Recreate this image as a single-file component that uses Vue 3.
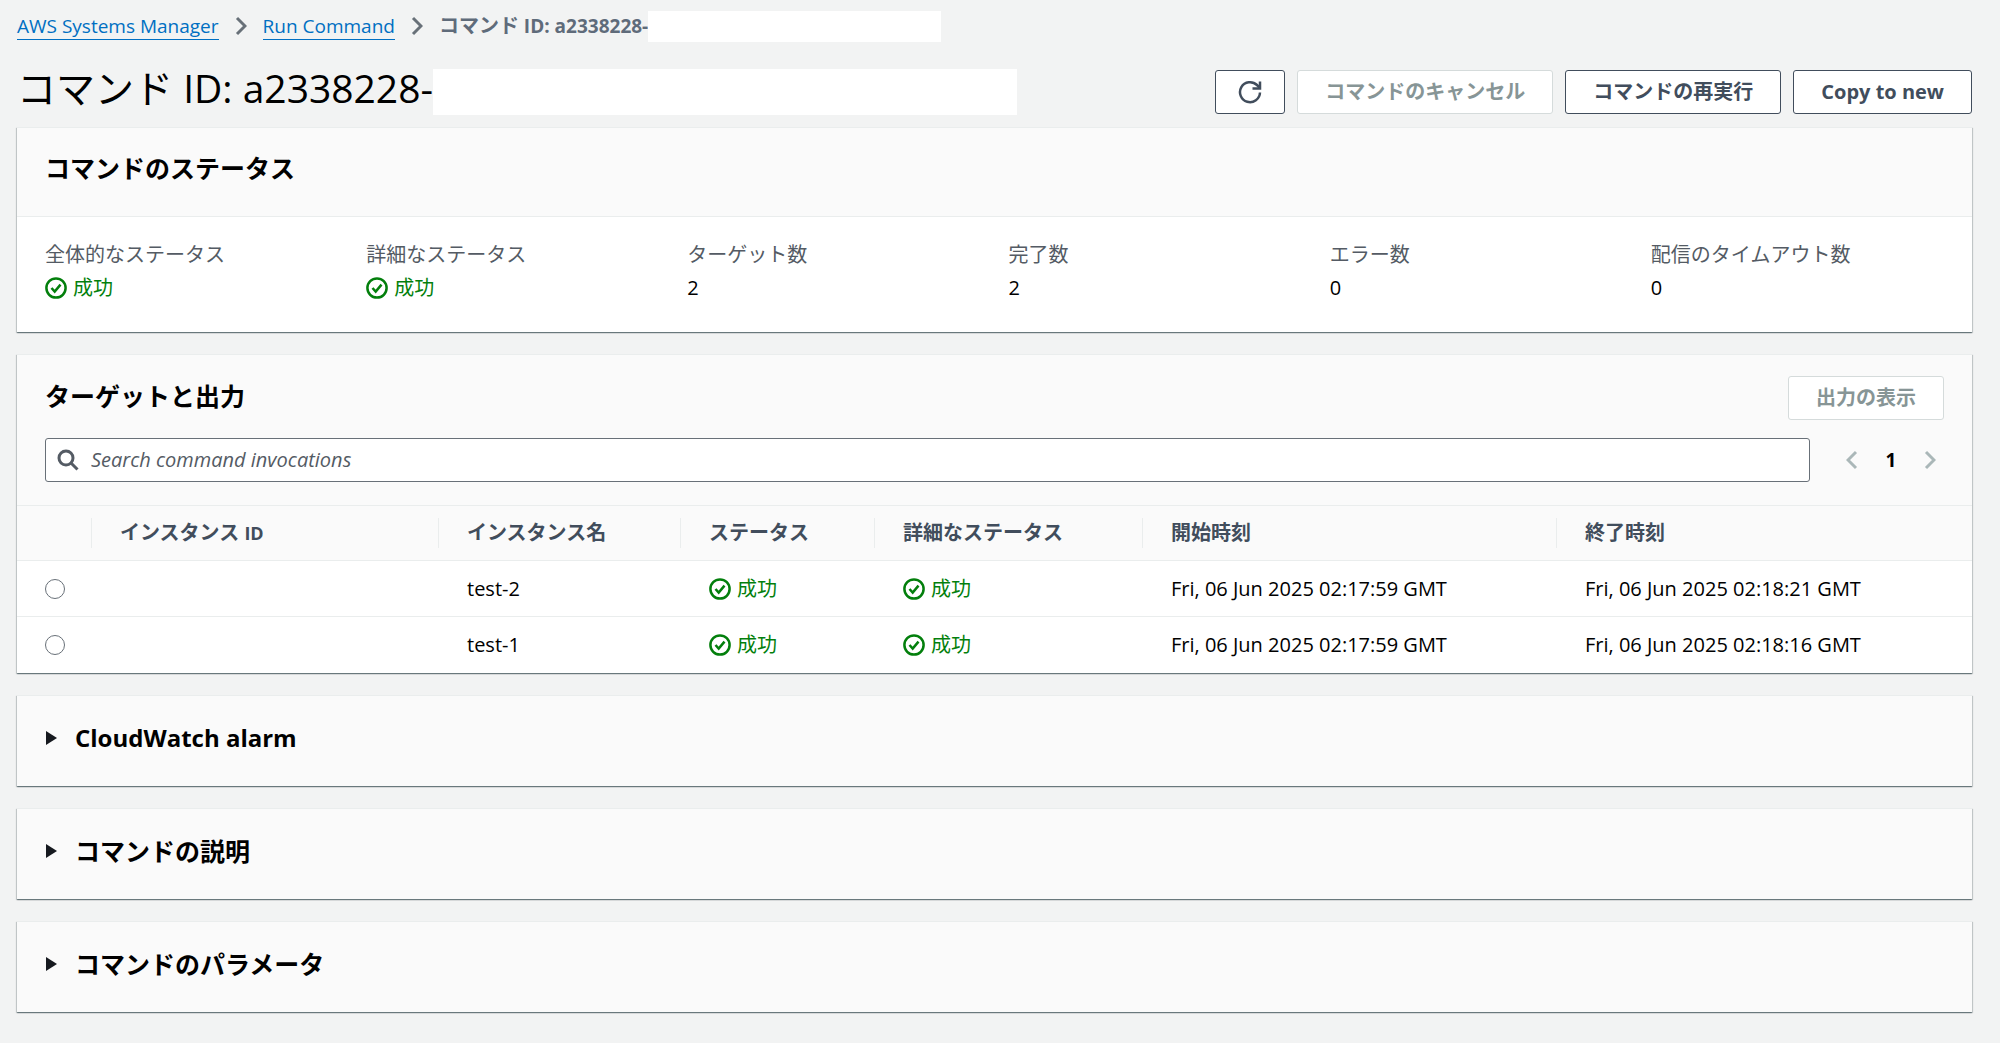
<script setup>
import { ref } from 'vue'

const commandId = 'a2338228-'
const selected = ref('')
const query = ref('')

const summary = [
  { label: '全体的なステータス', value: '成功', ok: true },
  { label: '詳細なステータス', value: '成功', ok: true },
  { label: 'ターゲット数', value: '2' },
  { label: '完了数', value: '2' },
  { label: 'エラー数', value: '0' },
  { label: '配信のタイムアウト数', value: '0' },
]

const invocations = [
  { name: 'test-2', start: 'Fri, 06 Jun 2025 02:17:59 GMT', end: 'Fri, 06 Jun 2025 02:18:21 GMT' },
  { name: 'test-1', start: 'Fri, 06 Jun 2025 02:17:59 GMT', end: 'Fri, 06 Jun 2025 02:18:16 GMT' },
]

const sections = [
  { title: 'CloudWatch alarm', latin: true },
  { title: 'コマンドの説明' },
  { title: 'コマンドのパラメータ' },
]
</script>

<template>
  <div class="page">
    <nav class="breadcrumb" aria-label="Breadcrumb">
      <a href="#">AWS Systems Manager</a>
      <svg class="crumb-sep" viewBox="0 0 12 20" aria-hidden="true"><path d="M2 2l8 8-8 8" /></svg>
      <a href="#">Run Command</a>
      <svg class="crumb-sep" viewBox="0 0 12 20" aria-hidden="true"><path d="M2 2l8 8-8 8" /></svg>
      <span class="crumb-current"><span class="ja">コマンド</span> ID: {{ commandId }}</span>
      <span class="mask mask-crumb"></span>
    </nav>

    <header class="title-row">
      <h1>コマンド ID: {{ commandId }}</h1>
      <span class="mask mask-title"></span>
      <div class="actions">
        <button class="btn btn-icon" type="button" aria-label="Refresh">
          <svg viewBox="0 0 24 24" aria-hidden="true">
            <path d="M22 12.500a10 10 0 1 1-3-7.500l3 3" />
            <path d="M22 1.500v7h-7.500" />
          </svg>
        </button>
        <button class="btn" type="button" disabled>コマンドのキャンセル</button>
        <button class="btn" type="button">コマンドの再実行</button>
        <button class="btn" type="button">Copy to new</button>
      </div>
    </header>

    <main class="cards">
      <section class="card">
        <div class="card-head"><h2>コマンドのステータス</h2></div>
        <dl class="summary">
          <div v-for="item in summary" :key="item.label">
            <dt>{{ item.label }}</dt>
            <dd>
              <span v-if="item.ok" class="status">
                <svg viewBox="0 0 22 22" aria-hidden="true"><circle cx="11" cy="11" r="9.600" /><path d="M6.500 11l3.200 3.600 5.800-7" /></svg>{{ item.value }}
              </span>
              <template v-else>{{ item.value }}</template>
            </dd>
          </div>
        </dl>
      </section>

      <section class="card">
        <div class="targets-head">
          <div class="targets-title">
            <h2>ターゲットと出力</h2>
            <button class="btn" type="button" disabled>出力の表示</button>
          </div>
          <div class="tools">
            <label class="search">
              <svg viewBox="0 0 22 22" aria-hidden="true"><circle cx="9" cy="9" r="7" /><path d="M14 14l6.500 6.500" /></svg>
              <input v-model="query" type="text" placeholder="Search command invocations" aria-label="Search command invocations" />
            </label>
            <div class="pager">
              <button type="button" disabled aria-label="Previous page"><svg viewBox="0 0 12 20" aria-hidden="true"><path d="M10 2l-8 8 8 8" /></svg></button>
              <button type="button" class="page-no">1</button>
              <button type="button" disabled aria-label="Next page"><svg viewBox="0 0 12 20" aria-hidden="true"><path d="M2 2l8 8-8 8" /></svg></button>
            </div>
          </div>
        </div>
        <table>
          <colgroup>
            <col class="c-pick" /><col class="c-id" /><col class="c-name" /><col class="c-status" /><col class="c-detail" /><col class="c-start" /><col />
          </colgroup>
          <thead>
            <tr>
              <th></th>
              <th><span>インスタンス <span class="latin">ID</span></span></th>
              <th><span>インスタンス名</span></th>
              <th><span>ステータス</span></th>
              <th><span>詳細なステータス</span></th>
              <th><span>開始時刻</span></th>
              <th><span>終了時刻</span></th>
            </tr>
          </thead>
          <tbody>
            <tr v-for="row in invocations" :key="row.name">
              <td class="pick"><input v-model="selected" type="radio" name="invocation" :value="row.name" :aria-label="row.name" /></td>
              <td></td>
              <td>{{ row.name }}</td>
              <td v-for="n in 2" :key="n">
                <span class="status">
                  <svg viewBox="0 0 22 22" aria-hidden="true"><circle cx="11" cy="11" r="9.600" /><path d="M6.500 11l3.200 3.600 5.800-7" /></svg>成功
                </span>
              </td>
              <td>{{ row.start }}</td>
              <td>{{ row.end }}</td>
            </tr>
          </tbody>
        </table>
      </section>

      <section v-for="s in sections" :key="s.title" class="card">
        <h2 class="fold">
          <button type="button" aria-expanded="false" :class="{ 'fold-latin': s.latin }">
            <svg viewBox="0 0 11 14" aria-hidden="true"><path d="M0 0l11 7-11 7z" /></svg>{{ s.title }}
          </button>
        </h2>
      </section>
    </main>
  </div>
</template>

<style>
body {
  margin: 0;
  background: #f2f3f3;
}
</style>

<style scoped>
.page {
  padding: 0 28px 31px 17px;
  color: #000;
  font-family: "Open Sans", "Noto Sans CJK JP", sans-serif;
  font-size: 20px;
  line-height: 28px;
}
svg {
  fill: none;
  stroke: currentColor;
  flex: none;
}
h1, h2, dl, dd {
  margin: 0;
}

.breadcrumb {
  display: flex;
  align-items: center;
  height: 52px;
  font-size: 19px;
}
.breadcrumb a {
  color: #006fc2;
  line-height: 26px;
  text-decoration: none;
  border-bottom: 1px solid #006fc2;
}
.crumb-sep {
  width: 12px;
  height: 20px;
  margin: 0 16px;
  color: #687078;
  stroke-width: 3;
}
.crumb-current {
  color: #5f6b7a;
  font-weight: 700;
}
.ja {
  font-size: 20px;
}
.mask {
  background: #fff;
}
.mask-crumb {
  width: 293px;
  height: 31px;
}
.mask-title {
  width: 584px;
  height: 46px;
}

.title-row {
  display: flex;
  align-items: center;
  box-sizing: border-box;
  height: 75px;
  padding-top: 5px;
}
h1 {
  padding-bottom: 8px;
  font-size: 39px;
  font-weight: 400;
  line-height: 48px;
}
.actions {
  display: flex;
  gap: 12px;
  margin-left: auto;
}
.btn {
  box-sizing: border-box;
  height: 44px;
  padding: 0 27px;
  border: 1px solid #414d5c;
  border-radius: 3px;
  background: #fff;
  color: #414d5c;
  font-family: inherit;
  font-size: 20px;
  font-weight: 700;
  line-height: 28px;
  white-space: nowrap;
}
.latin {
  font-size: 18px;
}
.btn:disabled {
  border-color: #d5dbdb;
  color: #879596;
}
.btn-icon {
  display: flex;
  align-items: center;
  width: 70px;
  padding: 0 22px;
}
.btn-icon svg {
  width: 24px;
  height: 24px;
  stroke-width: 2.5;
}

.cards {
  display: grid;
  gap: 22px;
}
.card {
  border-top: 1px solid #eaeded;
  background: #fff;
  box-shadow: 0 1px 1px rgba(0, 28, 36, 0.4), 1px 1px 1px rgba(0, 28, 36, 0.15), -1px 1px 1px rgba(0, 28, 36, 0.15);
}
h2 {
  font-size: 25px;
  font-weight: 700;
  line-height: 32px;
}
.card-head {
  padding: 24px 28px 32px;
  background: #fafafa;
  border-bottom: 1px solid #eaeded;
}
.summary {
  display: grid;
  grid-template-columns: repeat(6, 1fr);
  gap: 28px;
  padding: 22px 28px 27px;
}
dt {
  color: #545b64;
  line-height: 32px;
}
dd {
  line-height: 34px;
}
.status {
  display: flex;
  align-items: center;
  gap: 6px;
  color: #037f0c;
}
.status svg {
  width: 22px;
  height: 22px;
  stroke-width: 2.5;
}

.targets-head {
  padding: 21px 28px 23px;
  background: #fafafa;
  border-bottom: 1px solid #eaeded;
}
.targets-title {
  display: flex;
  justify-content: space-between;
  margin-bottom: 18px;
}
.targets-title h2 {
  line-height: 40px;
}
.tools {
  display: flex;
  align-items: center;
}
.search {
  display: flex;
  flex: 1;
  align-items: center;
  box-sizing: border-box;
  height: 44px;
  padding: 0 11px;
  border: 1px solid #687078;
  border-radius: 3px;
  background: #fff;
  color: #545b64;
}
.search svg {
  width: 22px;
  height: 22px;
  stroke-width: 3;
}
.search input {
  flex: 1;
  min-width: 0;
  margin-left: 12px;
  padding: 0;
  border: 0;
  outline: 0;
  background: none;
  font: inherit;
}
.search input::placeholder {
  color: #545b64;
  font-style: italic;
  opacity: 1;
}
.pager {
  display: flex;
  align-items: center;
  gap: 22px;
  margin-left: 36px;
  padding-right: 8px;
}
.pager button {
  display: flex;
  padding: 0;
  border: 0;
  background: none;
  color: #aab7b8;
  font: inherit;
}
.pager .page-no {
  justify-content: center;
  width: 22px;
  color: #000;
  font-size: 19px;
  font-weight: 700;
}
.pager svg {
  width: 12px;
  height: 20px;
  stroke-width: 3;
}

table {
  width: 100%;
  border-collapse: separate;
  border-spacing: 0;
  table-layout: fixed;
}
.c-pick { width: 74px; }
.c-id { width: 347px; }
.c-name { width: 242px; }
.c-status { width: 194px; }
.c-detail { width: 268px; }
.c-start { width: 414px; }
th {
  padding: 12px 0;
  background: #fafafa;
  border-bottom: 1px solid #eaeded;
  color: #414d5c;
  line-height: 30px;
  text-align: left;
}
th > span {
  display: block;
  padding-left: 28px;
  border-left: 1px solid #eaeded;
}
td {
  height: 55px;
  padding: 0 0 0 29px;
  border-bottom: 1px solid #eaeded;
  white-space: nowrap;
}
tr:last-child td {
  height: 56px;
  border-bottom: 0;
}
td.pick {
  padding-left: 28px;
}
.pick input {
  display: block;
  appearance: none;
  box-sizing: border-box;
  width: 20px;
  height: 20px;
  margin: 0;
  border: 1px solid #687078;
  border-radius: 50%;
  background: #fff;
}
.pick input:checked {
  border: 6px solid #0073bb;
}

.fold {
  background: #fafafa;
}
.fold button {
  display: flex;
  align-items: center;
  gap: 18px;
  width: 100%;
  padding: 26px 29px 32px;
  border: 0;
  background: none;
  color: #000;
  font: inherit;
  text-align: left;
}
.fold .fold-latin {
  font-size: 24px;
}
.fold svg {
  width: 11px;
  height: 14px;
  fill: #16191f;
  stroke: none;
}
</style>
